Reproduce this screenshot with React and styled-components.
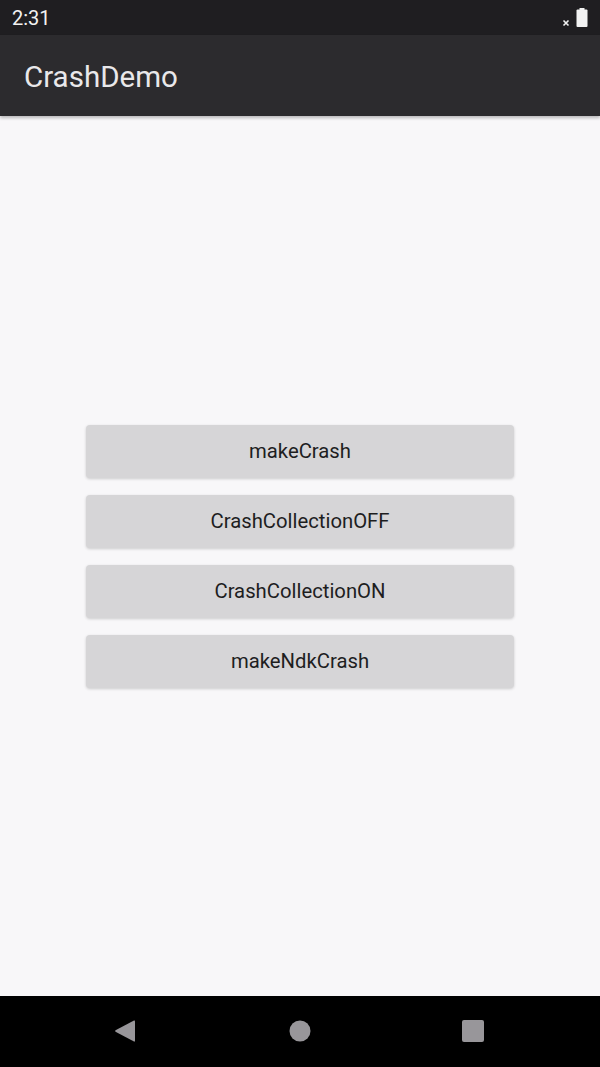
import React from "react";
import styled, { createGlobalStyle } from "styled-components";

const Global = createGlobalStyle`
  html, body { margin: 0; padding: 0; }
  body { font-family: Roboto, "Noto Sans", sans-serif; background: #f8f7f9; }
  #root { height: 1067px; }
`;

const Screen = styled.div`
  width: 600px;
  height: 1067px;
  display: flex;
  flex-direction: column;
  background: #f8f7f9;
`;

const StatusBar = styled.div`
  height: 35px;
  background: #1f1e21;
  display: flex;
  align-items: center;
  justify-content: space-between;
  padding: 0 12px 0 12px;
  color: #f2f2f2;
`;

const Time = styled.span`
  font-size: 20px;
  line-height: 35px;
  margin-top: 1px;
`;

const StatusIcons = styled.div`
  display: flex;
  align-items: flex-end;
  gap: 6px;
  margin-top: -1px;
`;

const AppBar = styled.div`
  height: 81px;
  background: #2c2b2e;
  display: flex;
  align-items: center;
  padding-left: 24px;
  box-shadow: 0 2px 3px rgba(0, 0, 0, 0.25);
  position: relative;
  z-index: 1;
`;

const Title = styled.h1`
  margin: 0;
  font-size: 29.5px;
  font-weight: 400;
  color: #e9e8ea;
  margin-top: 2px;
`;

const Content = styled.main`
  flex: 1;
  display: flex;
  flex-direction: column;
  align-items: center;
  justify-content: center;
  gap: 17px;
  padding-top: 1px;
`;

const Button = styled.button`
  width: 428px;
  height: 53px;
  border: none;
  border-radius: 4px;
  background: #d6d5d7;
  box-shadow: 0 1px 3px rgba(0, 0, 0, 0.18);
  font-family: Roboto, "Noto Sans", sans-serif;
  font-size: 20.3px;
  color: #1e1e1f;
  padding: 0 0 1px 0;
`;

const NavBar = styled.nav`
  height: 70px;
  background: #000;
  display: grid;
  grid-template-columns: repeat(3, 1fr);
  align-items: center;
  justify-items: center;
  padding-bottom: 1px;
`;

const NavIcon = styled.svg`
  display: block;
`;

export default function App() {
  const labels = ["makeCrash", "CrashCollectionOFF", "CrashCollectionON", "makeNdkCrash"];
  return (
    <>
      <Global />
      <Screen>
        <StatusBar>
          <Time>2:31</Time>
          <StatusIcons>
            <svg width="8" height="8" viewBox="0 0 8 8">
              <path d="M1.5 1.5 L6.5 6.5 M6.5 1.5 L1.5 6.5" stroke="#f2f2f2" strokeWidth="1.6" />
            </svg>
            <svg width="12" height="19" viewBox="0 0 12 19">
              <rect x="3.5" y="0" width="5" height="2" fill="#f2f2f2" />
              <rect x="0.5" y="1.5" width="11" height="17.5" rx="1" fill="#f2f2f2" />
            </svg>
          </StatusIcons>
        </StatusBar>
        <AppBar>
          <Title>CrashDemo</Title>
        </AppBar>
        <Content>
          {labels.map((l) => (
            <Button key={l}>{l}</Button>
          ))}
        </Content>
        <NavBar>
          <NavIcon width="22" height="24" viewBox="0 0 22 24" style={{ marginLeft: 50 }}>
            <path d="M20 1.5 Q21 1 21 2.5 L21 21.5 Q21 23 20 22.5 L1.5 12.8 Q0.8 12 1.5 11.2 Z" fill="#98969a" />
          </NavIcon>
          <NavIcon width="22" height="22" viewBox="0 0 22 22">
            <circle cx="11" cy="11" r="10.5" fill="#98969a" />
          </NavIcon>
          <NavIcon width="22" height="22" viewBox="0 0 22 22" style={{ marginRight: 54 }}>
            <rect x="0" y="0" width="22" height="22" rx="2" fill="#98969a" />
          </NavIcon>
        </NavBar>
      </Screen>
    </>
  );
}
